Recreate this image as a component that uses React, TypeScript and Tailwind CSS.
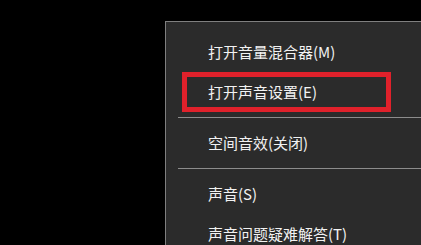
export default function App() {
  const font = { fontFamily: '"Noto Sans CJK SC", "Liberation Sans", sans-serif' };

  return (
    <div className="w-[421px] h-[245px] overflow-hidden bg-black" style={font}>
      <div className="ml-[165px] mt-[21px] w-[280px] h-[260px] border border-[#7f7f7f] bg-[#2b2b2b] pt-[10px] text-[15px] text-[#f2f2f2]">
        {/* Volume mixer */}
        <div className="h-[40px] flex items-center pl-[42px]">打开音量混合器(M)</div>

        {/* Sound settings, highlighted */}
        <div className="relative h-[40px] flex items-center pl-[42px]">
          打开声音设置(E)
          <div className="absolute left-[16px] top-0 w-[209px] h-[40px] border-[5px] border-[#e0212b]" />
        </div>

        <div className="py-[5px] pl-[12px]">
          <div className="h-px bg-[#8c8c8c]" />
        </div>

        <div className="h-[40px] flex items-center pl-[42px]">空间音效(关闭)</div>

        <div className="py-[5px] pl-[12px]">
          <div className="h-px bg-[#8c8c8c]" />
        </div>

        <div className="h-[40px] flex items-center pl-[42px]">声音(S)</div>
        <div className="h-[40px] flex items-center pl-[42px]">声音问题疑难解答(T)</div>
      </div>
    </div>
  );
}
